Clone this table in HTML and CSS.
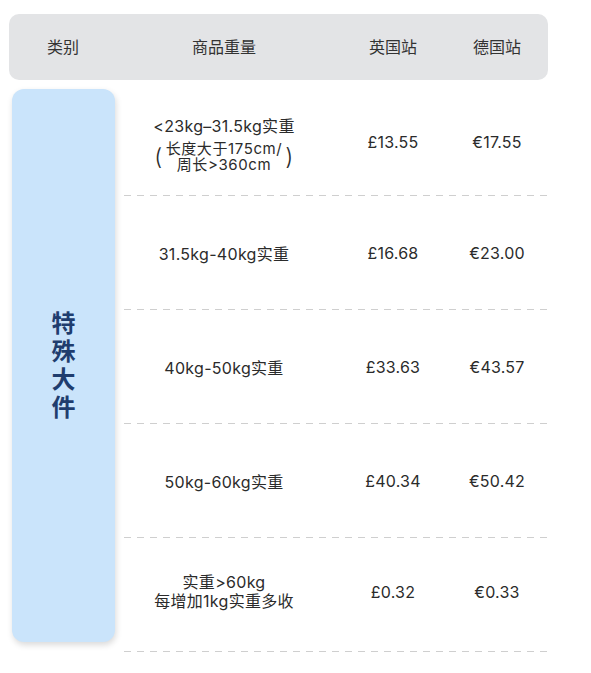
FILE: index.html
```html
<!DOCTYPE html>
<html lang="zh-CN">
<head>
  <meta charset="UTF-8">
  <meta name="viewport" content="width=device-width, initial-scale=1.0">
  <title>特殊大件运费</title>
  <link rel="stylesheet" href="styles.css">
</head>
<body>

  <div class="price-table">
    <!-- Header -->
    <div class="thead">
      <div class="th">类别</div>
      <div class="th weight">商品重量</div>
      <div class="th">英国站</div>
      <div class="th">德国站</div>
    </div>

    <!-- Body -->
    <div class="tbody">
      <div class="category-col">
        <div class="category">
          <span>特</span><span>殊</span><span>大</span><span>件</span>
        </div>
      </div>

      <div class="rows">
        <div class="row first">
          <div class="cell weight">
            <div class="multi">
              <div class="main-line">&lt;23kg–31.5kg实重</div>
              <div class="note">
                <span class="paren">(</span>
                <span class="note-text">
                  <span>长度大于175cm/</span>
                  <span>周长&gt;360cm</span>
                </span>
                <span class="paren">)</span>
              </div>
            </div>
          </div>
          <div class="cell price">£13.55</div>
          <div class="cell price">€17.55</div>
        </div>

        <div class="row">
          <div class="cell weight">31.5kg-40kg实重</div>
          <div class="cell price">£16.68</div>
          <div class="cell price">€23.00</div>
        </div>

        <div class="row">
          <div class="cell weight">40kg-50kg实重</div>
          <div class="cell price">£33.63</div>
          <div class="cell price">€43.57</div>
        </div>

        <div class="row">
          <div class="cell weight">50kg-60kg实重</div>
          <div class="cell price">£40.34</div>
          <div class="cell price">€50.42</div>
        </div>

        <div class="row last">
          <div class="cell weight">
            <div class="two-line">实重&gt;60kg<br>每增加1kg实重多收</div>
          </div>
          <div class="cell price">£0.32</div>
          <div class="cell price">€0.33</div>
        </div>
      </div>
    </div>
  </div>

</body>
</html>
```

FILE: styles.css
```css
body {
  margin: 0;
  padding: 14px 0 0 9px;
  background-color: #fff;
  font-family: Inter, "Noto Sans CJK SC", sans-serif;
  color: #2b2b2b;
}
.price-table {
  width: 539px;
}
.thead {
  display: grid;
  grid-template-columns: 115px 216px 106px 102px;
  height: 66px;
  box-sizing: border-box;
  padding-bottom: 3px;
  align-items: center;
  background-color: #e3e4e6;
  border-radius: 10px;
  font-size: 16px;
  color: #333;
}
.th {
  text-align: center;
}
.th:first-child {
  padding-right: 7px;
}
.weight {
  padding-right: 16px;
}
.tbody {
  display: grid;
  grid-template-columns: 115px 1fr;
  margin-top: 9px;
}
.category-col {
  padding-left: 3px;
}
.category {
  width: 103px;
  height: 553px;
  background-color: #cae4fb;
  border-radius: 12px;
  box-shadow: 1px 3px 6px rgba(0, 0, 0, 0.15);
  display: flex;
  flex-direction: column;
  align-items: center;
  justify-content: center;
  font-size: 24px;
  font-weight: bold;
  line-height: 28px;
  color: #1f3d6e;
}
.row {
  display: grid;
  grid-template-columns: 216px 106px 102px;
  align-items: center;
  height: 114px;
  box-sizing: border-box;
  padding-bottom: 1px;
  background-image: linear-gradient(to right, #cfcfcf 7px, transparent 7px);
  background-size: 13px 1px;
  background-repeat: repeat-x;
  background-position: left bottom;
}
.row.first {
  height: 107px;
}
.row.last {
  padding-bottom: 7px;
}
.cell {
  text-align: center;
  font-size: 16px;
  letter-spacing: 0.3px;
}
.price {
  font-size: 16px;
  letter-spacing: 0.2px;
}
.multi {
  display: flex;
  flex-direction: column;
  align-items: center;
}
.main-line {
  line-height: 20px;
  margin-top: 4px;
  margin-bottom: 5px;
}
.note {
  display: flex;
  align-items: center;
  gap: 3px;
}
.paren {
  font-size: 23px;
  font-weight: 300;
  line-height: 28px;
}
.note-text {
  display: flex;
  flex-direction: column;
  align-items: center;
  font-size: 15px;
  letter-spacing: 0.6px;
  line-height: 16px;
}
.two-line {
  font-size: 16px;
  line-height: 19px;
}
```
